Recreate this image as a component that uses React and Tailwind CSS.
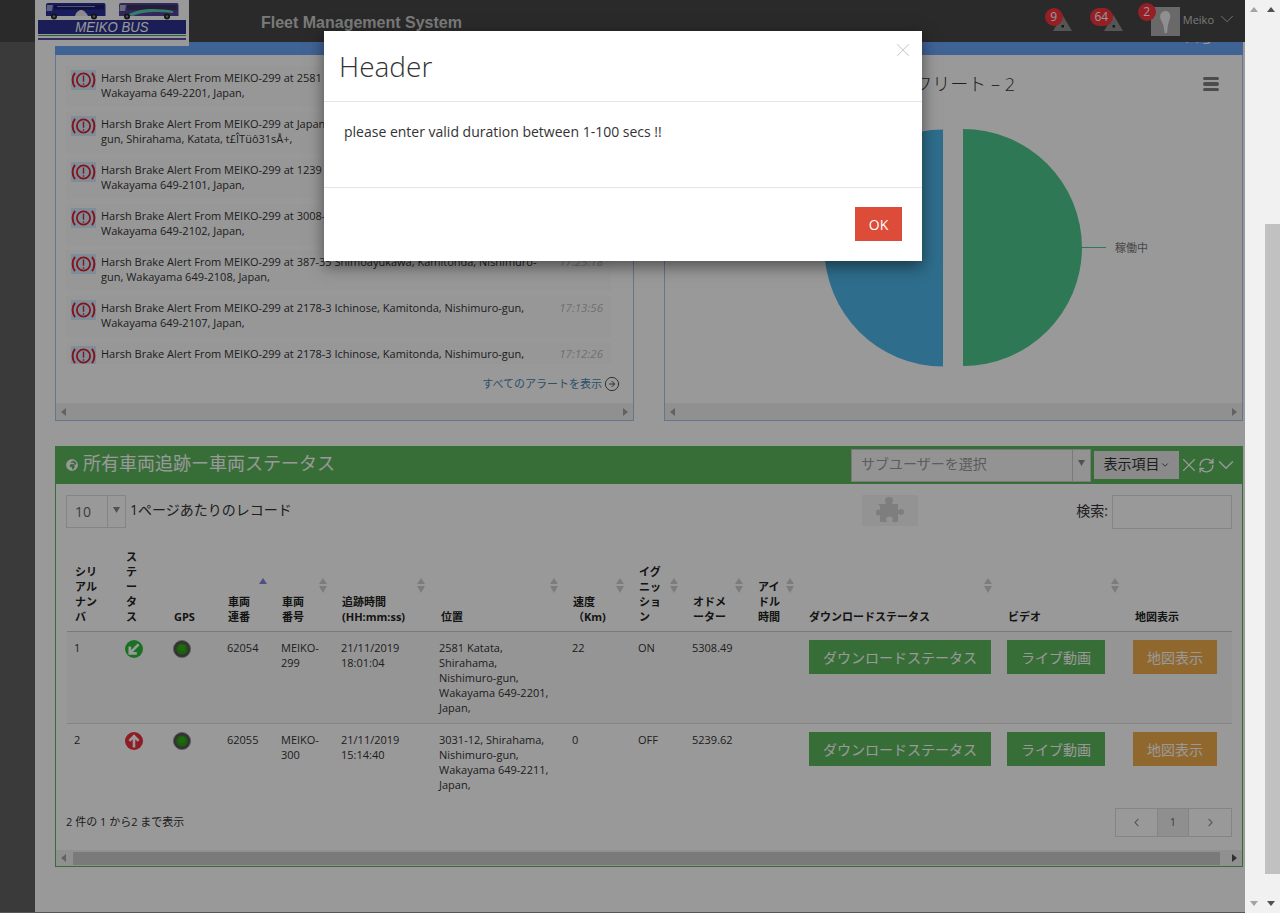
import React from "react";
import { X, ChevronDown, RefreshCw, ChevronLeft, ChevronRight, ArrowRightCircle } from "lucide-react";
import { FaGlobeAfrica } from "react-icons/fa";

const alerts = [
  ["Harsh Brake Alert From MEIKO-299 at 2581 Katata, Shirahama, Nishimuro-gun,", "Wakayama 649-2201, Japan,", "18:01:04"],
  ["Harsh Brake Alert From MEIKO-299 at Japan, Wakayama Prefecture, Nishimuro-", "gun, Shirahama, Katata, t£ÎTüô31sÅ+,", "17:58:20"],
  ["Harsh Brake Alert From MEIKO-299 at 1239 Asso, Shirahama, Nishimuro-gun,", "Wakayama 649-2101, Japan,", "17:45:12"],
  ["Harsh Brake Alert From MEIKO-299 at 3008-1 Tonda, Shirahama, Nishimuro-gun,", "Wakayama 649-2102, Japan,", "17:31:47"],
  ["Harsh Brake Alert From MEIKO-299 at 387-35 Shimoayukawa, Kamitonda, Nishimuro-", "gun, Wakayama 649-2108, Japan,", "17:25:18"],
  ["Harsh Brake Alert From MEIKO-299 at 2178-3 Ichinose, Kamitonda, Nishimuro-gun,", "Wakayama 649-2107, Japan,", "17:13:56"],
  ["Harsh Brake Alert From MEIKO-299 at 2178-3 Ichinose, Kamitonda, Nishimuro-gun,", "Wakayama 649-2107, Japan,", "17:12:26"],
];

const cols = [51, 48, 54, 54, 60, 98, 133, 66, 54, 65, 51, 198, 127, 106];

const heads = [
  { l: ["シリ", "アル", "ナン", "バ"] },
  { l: ["ス", "テ", "ー", "タ", "ス"] },
  { l: ["GPS"] },
  { l: ["車両", "連番"], active: true },
  { l: ["車両", "番号"], sort: true },
  { l: ["追跡時間", "(HH:mm:ss)"], sort: true },
  { l: ["位置"], sort: true, wide: true },
  { l: ["速度", "（Km)"], sort: true },
  { l: ["イグ", "ニッ", "ショ", "ン"], sort: true },
  { l: ["オドメ", "ーター"], sort: true },
  { l: ["アイ", "ドル", "時間"], sort: true },
  { l: ["ダウンロードステータス"], sort: true },
  { l: ["ビデオ"], sort: true, wide: true },
  { l: ["地図表示"], wide: true },
];

function BrakeIcon() {
  return (
    <svg width="25" height="20" viewBox="0 0 25 20" className="shrink-0">
      <rect width="25" height="20" fill="#d4ecff" />
      <circle cx="12.5" cy="10" r="6.6" fill="none" stroke="#e0202c" strokeWidth="1.8" />
      <path d="M4 2.8C0.8 7 0.8 13 4 17.2M21 2.8C24.2 7 24.2 13 21 17.2" fill="none" stroke="#e0202c" strokeWidth="2" />
      <path d="M12.5 5.5V11.8M12.5 13.2V14.8" stroke="#e0202c" strokeWidth="1.4" />
    </svg>
  );
}

function Warn() {
  return (
    <svg width="19" height="16" viewBox="0 0 19 16" className="block">
      <path d="M9.5 0L19 16H0Z" fill="#8e8e8e" />
      <rect x="8.5" y="10" width="2.5" height="2.5" fill="#2a2a2a" />
    </svg>
  );
}

function SortArrows({ active }) {
  return (
    <span className="absolute right-[7px] top-[33px] flex flex-col gap-[2px]">
      <svg width="8" height="6" viewBox="0 0 8 6"><path d="M4 0L8 6H0Z" fill={active ? "#7f88e0" : "#cfcfcf"} /></svg>
      {active ? <span className="h-[7px]" /> : <svg width="8" height="7" viewBox="0 0 8 7"><path d="M4 7L8 0H0Z" fill="#cfcfcf" /></svg>}
    </span>
  );
}

function StatusIcon({ up }) {
  return (
    <svg width="18" height="18" viewBox="0 0 18 18" className="block">
      <circle cx="9" cy="9" r="9" fill={up ? "#ec2f3c" : "#2bbd3c"} />
      {up ? (
        <path d="M9 15.5V4.5M4.4 8.8L9 4.2l4.6 4.6" fill="none" stroke="#fff" strokeWidth="2.6" />
      ) : (
        <path d="M13.6 4.4L5.6 12.4M4.8 6.4v7h7" fill="none" stroke="#fff" strokeWidth="2.7" />
      )}
    </svg>
  );
}

function GpsIcon() {
  return (
    <svg width="18" height="18" viewBox="0 0 18 18" className="block">
      <circle cx="9" cy="9" r="8.6" fill="#555" stroke="#9a9a9a" strokeWidth="0.8" />
      <circle cx="9" cy="9" r="5.6" fill="#2f9e14" />
      <circle cx="9" cy="8" r="3.2" fill="#36b01a" />
    </svg>
  );
}

function ActionCells() {
  return (
    <>
      <td className="pt-[8px] pl-[8px] align-top">
        <div className="w-[182px] h-[34px] bg-[#5cb85c] text-white text-[14px] flex items-center justify-center">ダウンロードステータス</div>
      </td>
      <td className="pt-[8px] pl-[8px] align-top">
        <div className="w-[98px] h-[34px] bg-[#5cb85c] text-white text-[14px] flex items-center justify-center">ライブ動画</div>
      </td>
      <td className="pt-[8px] pl-[7px] align-top">
        <div className="w-[84px] h-[34px] bg-[#f0ad4e] text-white text-[14px] flex items-center justify-center">地図表示</div>
      </td>
    </>
  );
}

function Row({ n, up, unit, no, t1, t2, loc, sp, ign, odo, striped }) {
  const td = "pt-[8px] pb-[8px] pl-[7px] align-top";
  return (
    <tr className={"border-b border-[#ddd] last:border-b-0 " + (striped ? "bg-[#f9f9f9]" : "")}>
      <td className={td}>{n}</td>
      <td className="pt-[8px] pl-[7px] align-top"><StatusIcon up={up} /></td>
      <td className="pt-[8px] pl-[7px] align-top"><GpsIcon /></td>
      <td className={td}>{unit}</td>
      <td className={td}>MEIKO-<br />{no}</td>
      <td className={td}>{t1}<br />{t2}</td>
      <td className={td}>{loc.map((l) => <div key={l}>{l}</div>)}</td>
      <td className={td}>{sp}</td>
      <td className={td}>{ign}</td>
      <td className={td}>{odo}</td>
      <td className={td}></td>
      <ActionCells />
    </tr>
  );
}

function HBar({ thumb }) {
  return (
    <div className={(thumb ? "h-[16px]" : "h-[17px]") + " bg-[#f1f1f1] flex items-center px-[5px]"}>
      <svg width="5" height="8" viewBox="0 0 5 8"><path d="M0 4L5 0V8Z" fill="#a3a3a3" /></svg>
      {thumb && <div className="ml-[7px] h-[13px] w-[1147px] bg-[#cbcbcb]" />}
      <svg width="5" height="8" viewBox="0 0 5 8" className="ml-auto"><path d="M5 4L0 0V8Z" fill={thumb ? "#505050" : "#a3a3a3"} /></svg>
    </div>
  );
}

function Buses() {
  return (
    <svg width="154" height="20" viewBox="0 0 154 20" className="block">
      <path d="M11 5Q11 3 13 3H69Q70.500 3 70.500 5V16H11Z" fill="#2a2f9a" />
      <path d="M12 5H18L17 11H11.500Z" fill="#9aa6d8" />
      <rect x="19" y="5" width="50" height="4.500" fill="#1c1f66" />
      <path d="M22 6H60V7H22Z" fill="#8890c8" />
      <path d="M40 16C41 12 44 9.500 47 10C50 11 52 14 53 16Z" fill="#e8e8e8" />
      <circle cx="19" cy="16.500" r="3" fill="#222" />
      <circle cx="19" cy="16.500" r="1.200" fill="#888" />
      <circle cx="59" cy="16.500" r="3" fill="#222" />
      <circle cx="59" cy="16.500" r="1.200" fill="#888" />
      <path d="M84 5Q84 3 86 3H142Q143.500 3 143.500 5V16H84Z" fill="#54409a" />
      <path d="M85 5H91L90 11H84.500Z" fill="#a8b4c8" />
      <rect x="92" y="5" width="50" height="5" fill="#3a3560" />
      <path d="M92 15C104 8 122 8 138 11V13C122 11 106 12 98 16Z" fill="#5ccfb0" />
      <circle cx="92" cy="16.500" r="3" fill="#222" />
      <circle cx="92" cy="16.500" r="1.200" fill="#888" />
      <circle cx="132" cy="16.500" r="3" fill="#222" />
      <circle cx="132" cy="16.500" r="1.200" fill="#888" />
    </svg>
  );
}

export default function App() {
  return (
    <div className="w-[1280px] h-[913px] flex overflow-hidden relative bg-white text-[#333] text-[12px] font-['Open_Sans','Noto_Sans_CJK_JP',sans-serif]">
      <div className="w-[1245px] h-[913px] relative flex overflow-hidden border-b border-[#555]">
        <div className="w-[35px] h-full bg-[#616161] shrink-0" />
        <div className="flex-1 bg-white pt-[20px] pl-[20px] pr-[1px]">
          {/* top row */}
          <div className="flex gap-[30px] h-[401px]">
            <div className="w-[579px] h-full border border-[#a9c4ee] border-t-0 flex flex-col">
              <div className="h-[35px] bg-[#6ba5fa] -mx-px" />
              <div className="flex flex-col">
                <div className="mt-[11px] mx-[10px] h-[298px] overflow-hidden flex flex-col gap-[5px] w-[545px]">
                  {alerts.map((a, i) => (
                    <div key={i} className="h-[41px] shrink-0 bg-[#fcfcfc] flex pl-[5px] pt-[4px] pr-[8px]">
                      <BrakeIcon />
                      <div className="ml-[5px] w-[439px] text-[11px] leading-[15px] whitespace-nowrap">
                        <div>{a[0]}</div>
                        <div>{a[1]}</div>
                      </div>
                      <div className="ml-auto text-[11.5px] leading-[15px] italic text-[#bbb]">{a[2]}</div>
                    </div>
                  ))}
                </div>
                <div className="mt-[12px] mr-[13px] flex justify-end items-center gap-[2px] text-[11px] text-[#4a86ad]">
                  <span>すべてのアラートを表示</span>
                  <ArrowRightCircle size={16} strokeWidth={1.5} className="text-[#555]" />
                </div>
              </div>
              <div className="mt-auto"><HBar /></div>
            </div>

            <div className="w-[579px] h-full border border-[#a9c4ee] border-t-0 flex flex-col relative">
              <div className="h-[35px] bg-[#6ba5fa] -mx-px flex justify-end items-start pr-[12px] pt-[9px] text-white text-[14px] leading-[18px] gap-[6px]">
                <span>ハら</span>
                <ChevronDown size={12} className="mt-[3px]" />
              </div>
              <div className="flex justify-between items-center pt-[18px] pl-[100px] pr-[23px] h-[40px]">
                <span className="text-[18px] leading-[24px] whitespace-nowrap font-light w-[250px] text-right">車両ステータス フリート – 2</span>
                <div className="flex flex-col gap-[2px]">
                  <div className="w-[16px] h-[3.5px] rounded-[2px] bg-[#7f7f7f]" />
                  <div className="w-[16px] h-[3.5px] rounded-[2px] bg-[#7f7f7f]" />
                  <div className="w-[16px] h-[3.5px] rounded-[2px] bg-[#7f7f7f]" />
                </div>
              </div>
              <svg width="330" height="240" viewBox="0 0 330 240" className="ml-[160px] mt-[34px] block">
                <path d="M118 0.5A118.500 118.500 0 1 0 118 237.500Z" fill="#4db6ea" />
                <path d="M138 0A119 118.500 0 0 1 138 237Z" fill="#4dc98e" />
                <path d="M257 118.500H281" stroke="#4dc98e" strokeWidth="1" />
                <text x="290" y="123" fontSize="11" fill="#777">稼働中</text>
              </svg>
              <div className="mt-auto"><HBar /></div>
            </div>
          </div>

          {/* green panel */}
          <div className="mt-[25px] w-[1188px] h-[421px] border border-[#5cb85c] border-t-0 flex flex-col">
            <div className="h-[38px] bg-[#5cb85c] -mx-px flex items-center pl-[11px] pr-[4px] text-white">
              <FaGlobeAfrica size={12} className="text-white" />
              <span className="ml-[5px] -mt-[4px] text-[18px] whitespace-nowrap">所有車両追跡ー車両ステータス</span>
              <div className="ml-auto flex items-center">
                <div className="w-[240px] h-[33px] bg-[#f6f6f6] border border-[#ccc] flex text-[#999] text-[14px]">
                  <div className="flex-1 flex items-center pl-[9px] pb-[4px]">サブユーザーを選択</div>
                  <div className="w-[18px] border-l border-[#ccc] flex pt-[10px] justify-center">
                    <svg width="7" height="6" viewBox="0 0 7 6"><path d="M0 0H7L3.500 6Z" fill="#888" /></svg>
                  </div>
                </div>
                <div className="ml-[3px] w-[85px] h-[28px] bg-[#e7e7e7] text-[#333] text-[14px] flex items-center justify-center whitespace-nowrap pb-[4px]">
                  表示項目<ChevronDown size={10} strokeWidth={2} className="mt-[3px]" />
                </div>
                <X size={22} strokeWidth={1.2} className="-ml-[1px] text-white" />
                <RefreshCw size={17} strokeWidth={2} className="-ml-[2px] text-white" />
                <ChevronDown size={26} strokeWidth={1.3} className="-ml-[2px] text-white" />
              </div>
            </div>

            <div className="flex items-start pt-[11px] pl-[10px] pr-[10px] h-[61px]">
              <div className="w-[60px] h-[33px] border border-[#ddd] flex text-[14px] text-[#666]">
                <div className="flex-1 flex items-center pl-[8px]">10</div>
                <div className="w-[18px] border-l border-[#ddd] flex pt-[11px] justify-center">
                  <svg width="7" height="6" viewBox="0 0 7 6"><path d="M0 0H7L3.500 6Z" fill="#888" /></svg>
                </div>
              </div>
              <div className="ml-[4px] mt-[5px] text-[14px] leading-[20px] whitespace-nowrap">1ページあたりのレコード</div>
              <div className="ml-[570px] w-[56px] h-[31px] bg-[#f5f5f5] flex items-center justify-center">
                <svg width="28" height="27" viewBox="0 0 28 27">
                  <path d="M2 7H9C10 7 10 6 9.500 5C8 2 10 0 13 0S18 2 16.500 5C16 6 16 7 17 7H22V12C22 13 23 13 24 12.500C26 11.500 28 12.500 28 15S26 18.500 24 17.500C23 17 22 17 22 18V25H17C16 25 16 24 16.500 23C17.500 21 16 19.500 13.500 19.500S9.500 21 10.500 23C11 24 11 25 10 25H4V19C4 18 3 18 2 18.500C0.500 19 0 17 0 15.500S0.500 12 2 12.500C3 13 4 13 4 12V9Z" fill="#d2d2d2" />
                </svg>
              </div>
              <div className="ml-auto mt-[6px] text-[14px] leading-[20px] whitespace-nowrap">検索:</div>
              <div className="ml-[4px] w-[120px] h-[34px] border border-[#ddd]" />
            </div>

            <table className="ml-[11px] w-[1165px] table-fixed border-collapse text-[11px] leading-[15px]">
              <colgroup>{cols.map((w, i) => <col key={i} style={{ width: w }} />)}</colgroup>
              <thead>
                <tr className="border-b border-[#ccc]">
                  {heads.map((h, i) => (
                    <th key={i} className={(h.wide ? "pl-[9px]" : "pl-[8px]") + " relative pr-0 pt-[4px] pb-[7px] text-left align-bottom font-bold whitespace-nowrap text-[#222]"}>
                      {h.l.map((x) => <div key={x}>{x}</div>)}
                      {(h.sort || h.active) && <SortArrows active={h.active} />}
                    </th>
                  ))}
                </tr>
              </thead>
              <tbody>
                <Row striped n="1" unit="62054" no="299" t1="21/11/2019" t2="18:01:04" loc={["2581 Katata,", "Shirahama,", "Nishimuro-gun,", "Wakayama 649-2201,", "Japan,"]} sp="22" ign="ON" odo="5308.49" />
                <Row up n="2" unit="62055" no="300" t1="21/11/2019" t2="15:14:40" loc={["3031-12, Shirahama,", "Nishimuro-gun,", "Wakayama 649-2211,", "Japan,"]} sp="0" ign="OFF" odo="5239.62" />
              </tbody>
            </table>

            <div className="mt-[8px] h-[29px] pl-[10px] pr-[10px] flex items-center justify-between text-[11px]">
              <span>2 件の 1 から2 まで表示</span>
              <div className="h-[29px] w-[117px] border border-[#ddd] flex text-[#999]">
                <div className="w-[42px] flex items-center justify-center border-r border-[#ddd]"><ChevronLeft size={13} /></div>
                <div className="w-[31px] flex items-center justify-center border-r border-[#ddd] bg-[#eee] text-[#666]">1</div>
                <div className="flex-1 flex items-center justify-center"><ChevronRight size={13} /></div>
              </div>
            </div>
            <div className="mt-auto"><HBar thumb /></div>
          </div>
        </div>

        {/* top bar */}
        <div className="absolute left-0 top-0 w-full h-[42px] bg-[#464646] flex items-start z-10">
          <div className="ml-[35px] w-[154px] h-[46px] bg-white shrink-0">
            <Buses />
            <div className="mx-[3px] h-[14px] bg-[#2d3192] flex items-center justify-center overflow-hidden">
              <span className="text-white text-[14px] leading-[14px] italic font-['Liberation_Sans',sans-serif] scale-x-[0.94] whitespace-nowrap">MEIKO BUS</span>
            </div>
            <div className="mx-[3px] mt-[1px] h-[1px] bg-[#3aa655]" />
            <div className="mx-[3px] mt-[2px] h-[1.5px] bg-[#5a4fa8]" />
          </div>
          <div className="ml-[72px] mt-[14px] text-[16px] leading-[18px] font-bold text-[#ccc] whitespace-nowrap font-['Liberation_Sans',sans-serif]">Fleet Management System</div>
          <div className="ml-auto flex items-start pr-[7px]">
            <div className="relative mt-[15px]">
              <Warn />
              <span className="absolute -left-[8px] -top-[7px] w-[18px] h-[18px] rounded-full bg-[#f8353f] text-white text-[12px] flex items-center justify-center">9</span>
            </div>
            <div className="relative mt-[15px] ml-[32px]">
              <Warn />
              <span className="absolute -left-[14px] -top-[7px] w-[23px] h-[18px] rounded-full bg-[#f8353f] text-white text-[12px] flex items-center justify-center">64</span>
            </div>
            <div className="relative mt-[7px] ml-[28px] w-[29px] h-[29px] bg-[#b0b0b0] flex items-center justify-center">
              <svg width="11" height="22" viewBox="0 0 11 22"><path d="M5.500 0C9 0 11 3 10 7c-.6 3-2 5-2.200 8L7 22H4.600L3.600 15C3 12 .8 10 .3 7-.6 3 2 0 5.500 0z" fill="#eee" /></svg>
              <span className="absolute -left-[13px] -top-[4px] w-[18px] h-[18px] rounded-full bg-[#f8353f] text-white text-[12px] flex items-center justify-center">2</span>
            </div>
            <span className="ml-[3px] mt-[12px] text-[11px] leading-[16px] text-[#ccc]">Meiko</span>
            <ChevronDown size={22} strokeWidth={1} className="ml-[2px] mt-[8px] text-[#ccc]" />
          </div>
        </div>

        {/* dim layer */}
        <div className="absolute inset-0 bg-black/40 z-20" />

        {/* modal */}
        <div className="absolute left-[324px] top-[31px] w-[598px] h-[230px] bg-white shadow-[0_5px_15px_rgba(0,0,0,0.5)] z-30 flex flex-col">
          <div className="h-[71px] border-b border-[#e5e5e5] pl-[15px] pr-[8px] flex items-start justify-between">
            <span className="mt-[15px] text-[28px] leading-[40px] font-light text-[#333]">Header</span>
            <X size={22} strokeWidth={1.1} className="mt-[8px] text-[#ccc]" />
          </div>
          <div className="h-[86px] border-b border-[#e5e5e5] pl-[20px] pt-[21px] text-[14px] leading-[18px]">please enter valid duration between 1-100 secs !!</div>
          <div className="flex-1 flex justify-end items-start pr-[20px] pt-[19px]">
            <div className="w-[47px] h-[34px] bg-[#dd4b39] text-white text-[14px] flex items-center justify-center font-medium">OK</div>
          </div>
        </div>
      </div>

      {/* window scrollbars */}
      <div className="w-[20px] h-full bg-[#f1f1f1] flex flex-col items-center justify-between pt-[7px] pb-[7px] pr-[2px]">
        <svg width="8" height="5" viewBox="0 0 8 5"><path d="M4 0L8 5H0Z" fill="#a3a3a3" /></svg>
        <svg width="8" height="5" viewBox="0 0 8 5"><path d="M4 5L8 0H0Z" fill="#a3a3a3" /></svg>
      </div>
      <div className="w-[15px] h-full bg-[#f1f1f1] flex flex-col pt-[7px] pb-[7px]">
        <svg width="8" height="5" viewBox="0 0 8 5" className="ml-[2px]"><path d="M4 0L8 5H0Z" fill="#505050" /></svg>
        <div className="w-[15px] h-[650px] mt-[212px] bg-[#c1c1c1]" />
        <svg width="8" height="5" viewBox="0 0 8 5" className="ml-[2px] mt-auto"><path d="M4 5L8 0H0Z" fill="#505050" /></svg>
      </div>
    </div>
  );
}
